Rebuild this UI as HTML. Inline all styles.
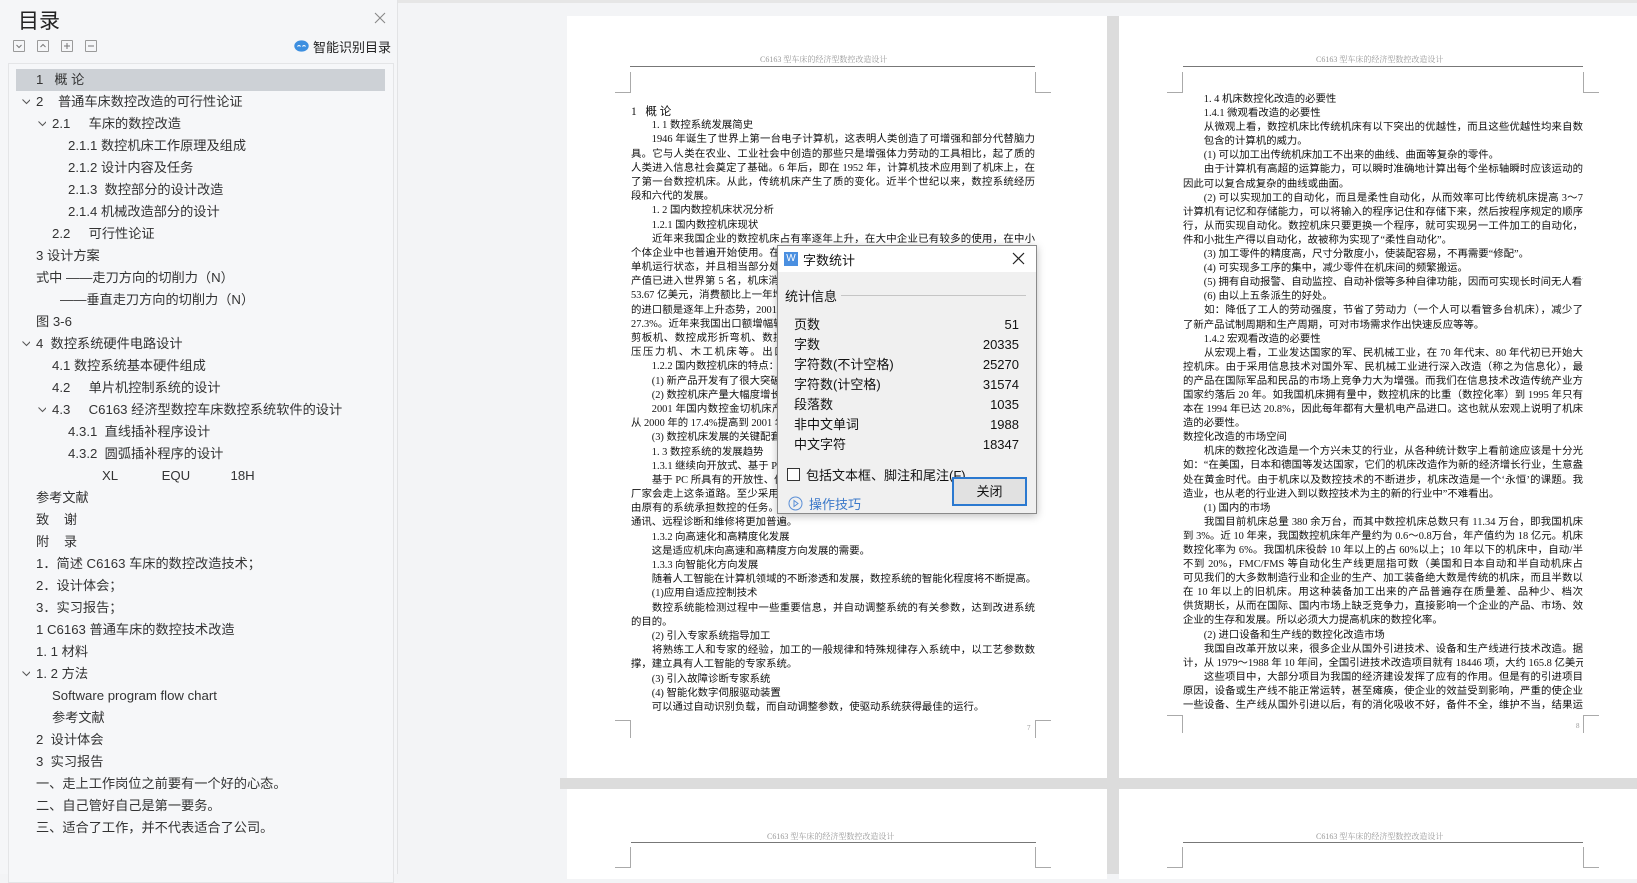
<!DOCTYPE html>
<html><head><meta charset="utf-8"><style>
*{margin:0;padding:0;box-sizing:border-box}
body{width:1637px;height:874px;overflow:hidden;background:#f3f4f6;font-family:"Liberation Sans","Noto Sans CJK SC",sans-serif;position:relative}
.side{position:absolute;left:0;top:0;width:398px;height:874px;background:#f5f6f8;border-right:1px solid #e2e3e5}
.ttl{position:absolute;left:18px;top:5px;font-size:21px;color:#222}
.x{position:absolute;left:372px;top:10px;width:16px;height:16px}
.ib{position:absolute;top:40px;width:12px;height:12px;border:1px solid #9a9a9a;border-radius:1px}
.ib svg{position:absolute;left:1px;top:1px}
.smart{position:absolute;left:313px;top:37px;font-size:13px;color:#222;white-space:nowrap}
.box{position:absolute;left:8px;top:63px;width:386px;height:820px;border:1px solid #e4e5e7;background:#f6f7f9}
.it{position:absolute;font-size:13.2px;color:#333;white-space:pre;line-height:22px}
.sel{position:absolute;left:16px;top:69px;width:369px;height:22px;background:#cdd1d6}
.chev{position:absolute;width:8px;height:8px}
.page{position:absolute;background:#fff}
.hd{position:absolute;font-size:8px;color:#999;white-space:nowrap;font-family:"Liberation Serif","Noto Serif CJK SC",serif}
.hl{position:absolute;height:1px;background:#777}
.cm{position:absolute;border-color:#aaa;border-style:solid;border-width:0}
.txt{position:absolute;font-family:"Liberation Serif","Noto Sans CJK SC",serif;font-size:10.4px;color:#111}
.txt div{white-space:nowrap;height:14.2px;line-height:14.2px;overflow:hidden}
.txt div.j{text-align:justify;text-align-last:justify;white-space:normal}
.p2 div{height:14.1px;line-height:14.1px}
.gap{position:absolute;background:#dcdcdc}
.dlg{position:absolute;left:777px;top:245px;width:260px;height:269px;background:#f0f0f0;border:1px solid #8a8a8a;box-shadow:0 2px 8px rgba(0,0,0,.25);font-size:13px;color:#111}
.dt{position:absolute;left:0;top:0;width:258px;height:26px;background:#fff}
.row{position:absolute;left:16px;width:225px;height:20px;line-height:20px}
.row span{float:right}
</style></head><body>
<div style="position:absolute;left:0;top:0;width:1637px;height:3px;background:#e6e6e6"></div>
<div class="side">
 <div class="ttl">目录</div>
 <svg class="x" viewBox="0 0 16 16"><path d="M3 3L13 13M13 3L3 13" stroke="#888" stroke-width="1.1"/></svg>
 <div class="ib" style="left:13px"><svg width="8" height="8"><path d="M1.5 3L4 5.5L6.5 3" stroke="#777" fill="none"/></svg></div>
 <div class="ib" style="left:37px"><svg width="8" height="8"><path d="M1.5 5L4 2.5L6.5 5" stroke="#777" fill="none"/></svg></div>
 <div class="ib" style="left:61px"><svg width="8" height="8"><path d="M4 1V7M1 4H7" stroke="#777"/></svg></div>
 <div class="ib" style="left:85px"><svg width="8" height="8"><path d="M1 4H7" stroke="#777"/></svg></div>
 <svg style="position:absolute;left:294px;top:40px" width="15" height="12" viewBox="0 0 15 12"><ellipse cx="7.5" cy="6" rx="7.2" ry="5.6" fill="#3d8fe0"/><path d="M3.5 6.5Q5 4.5 6.5 6.5M8.5 6.5Q10 4.5 11.5 6.5" stroke="#fff" fill="none" stroke-width="1.1"/></svg>
 <div class="smart">智能识别目录</div>
 <div class="box"></div>
 <div class="sel"></div>
</div>
<div id="toc"></div>
<!-- pages -->
<div class="page" style="left:567px;top:16px;width:540px;height:762px"></div>
<div class="page" style="left:1119px;top:16px;width:518px;height:762px"></div>
<div class="page" style="left:567px;top:789px;width:540px;height:90px"></div>
<div class="page" style="left:1119px;top:789px;width:518px;height:90px"></div>
<div class="gap" style="left:1107px;top:16px;width:12px;height:858px"></div>
<div class="gap" style="left:560px;top:778px;width:1077px;height:11px"></div>
<div class="hd" style="left:760px;top:54px">C6163 型车床的经济型数控改造设计</div>
<div class="hl" style="left:630px;top:66px;width:405px"></div>
<div class="hd" style="left:1316px;top:54px">C6163 型车床的经济型数控改造设计</div>
<div class="hl" style="left:1183px;top:66px;width:400px"></div>
<div class="hd" style="left:767px;top:831px">C6163 型车床的经济型数控改造设计</div>
<div class="hl" style="left:631px;top:842px;width:405px"></div>
<div class="hd" style="left:1316px;top:831px">C6163 型车床的经济型数控改造设计</div>
<div class="hl" style="left:1183px;top:842px;width:400px"></div>
<!-- corner marks -->
<div class="cm" style="left:615px;top:72px;width:16px;height:21px;border-right-width:1px;border-bottom-width:1px"></div>
<div class="cm" style="left:1035px;top:72px;width:16px;height:21px;border-left-width:1px;border-bottom-width:1px"></div>
<div class="cm" style="left:615px;top:720px;width:16px;height:18px;border-right-width:1px;border-top-width:1px"></div>
<div class="cm" style="left:1035px;top:720px;width:16px;height:18px;border-left-width:1px;border-top-width:1px"></div>
<div class="cm" style="left:1167px;top:72px;width:16px;height:21px;border-right-width:1px;border-bottom-width:1px"></div>
<div class="cm" style="left:1583px;top:72px;width:16px;height:21px;border-left-width:1px;border-bottom-width:1px"></div>
<div class="cm" style="left:1167px;top:715px;width:16px;height:18px;border-right-width:1px;border-top-width:1px"></div>
<div class="cm" style="left:1583px;top:715px;width:16px;height:18px;border-left-width:1px;border-top-width:1px"></div>
<div class="cm" style="left:615px;top:847px;width:16px;height:21px;border-right-width:1px;border-bottom-width:1px"></div>
<div class="cm" style="left:1035px;top:847px;width:16px;height:21px;border-left-width:1px;border-bottom-width:1px"></div>
<div class="cm" style="left:1167px;top:847px;width:16px;height:21px;border-right-width:1px;border-bottom-width:1px"></div>
<div class="cm" style="left:1583px;top:847px;width:16px;height:21px;border-left-width:1px;border-bottom-width:1px"></div>

<div class="txt" style="left:631px;top:105px;width:404px">
<div style="font-size:11.5px">1&nbsp;&nbsp; 概 论</div>
<div>&emsp;&emsp;1. 1 数控系统发展简史</div>
<div class="j">&emsp;&emsp;1946 年诞生了世界上第一台电子计算机，这表明人类创造了可增强和部分代替脑力劳动的工</div>
<div class="j">具。它与人类在农业、工业社会中创造的那些只是增强体力劳动的工具相比，起了质的飞跃，为</div>
<div class="j">人类进入信息社会奠定了基础。6 年后，即在 1952 年，计算机技术应用到了机床上，在美国诞生</div>
<div class="j">了第一台数控机床。从此，传统机床产生了质的变化。近半个世纪以来，数控系统经历了两个阶</div>
<div>段和六代的发展。</div>
<div>&emsp;&emsp;1. 2 国内数控机床状况分析</div>
<div>&emsp;&emsp;1.2.1 国内数控机床现状</div>
<div class="j">&emsp;&emsp;近年来我国企业的数控机床占有率逐年上升，在大中企业已有较多的使用，在中小企业甚至</div>
<div class="j">个体企业中也普遍开始使用。在这些数控机床中，除少量机床以FMS模式集成使用外，大都处于</div>
<div class="j">单机运行状态，并且相当部分处于使用效率不高，管理方式落后的状态。我国数控机床的消费和</div>
<div class="j">产值已进入世界第 5 名，机床消费额按同比增长计算，2001 年我国机床消费额达到了约为</div>
<div class="j">53.67 亿美元，消费额比上一年增长了百分之十几，数控机床的产值也逐年上升，数控机床</div>
<div class="j">的进口额是逐年上升态势，2001 年进口数控机床已达到约 10 亿美元，比上一年增长了约</div>
<div class="j">27.3%。近年来我国出口额增幅较大的数控机床有数控车床、数控磨床、数控钻床、数控</div>
<div class="j">剪板机、数控成形折弯机、数控压力机、加工中心、数控电火花机床、数控线切割机床、</div>
<div class="j">压压力机、木工机床等。出口的数控机床以中低档为主，出口金额相对不大。</div>
<div>&emsp;&emsp;1.2.2 国内数控机床的特点：</div>
<div>&emsp;&emsp;(1) 新产品开发有了很大突破，技术含量高的产品占据主导地位；</div>
<div>&emsp;&emsp;(2) 数控机床产量大幅度增长，数控化率显著提高；</div>
<div class="j">&emsp;&emsp;2001 年国内数控金切机床产量已达 1.8 万台，比上一年增长了约 28.5%。金切机床</div>
<div>从 2000 年的 17.4%提高到 2001 年的 20.2%。</div>
<div>&emsp;&emsp;(3) 数控机床发展的关键配套产品有了突破。</div>
<div>&emsp;&emsp;1. 3 数控系统的发展趋势</div>
<div>&emsp;&emsp;1.3.1 继续向开放式、基于 PC 的第六代方向发展</div>
<div class="j">&emsp;&emsp;基于 PC 所具有的开放性、低成本、高可靠性、软硬件资源丰富等特点，更多的数控系统生产</div>
<div class="j">厂家会走上这条道路。至少采用PC机作为它的前端机，来处理人机界面、编程、联网通信等问题，</div>
<div class="j">由原有的系统承担数控的任务。PC机所具有的友好的人机界面，将普及到所有的数控系统。远程</div>
<div>通讯、远程诊断和维修将更加普遍。</div>
<div>&emsp;&emsp;1.3.2 向高速化和高精度化发展</div>
<div>&emsp;&emsp;这是适应机床向高速和高精度方向发展的需要。</div>
<div>&emsp;&emsp;1.3.3 向智能化方向发展</div>
<div>&emsp;&emsp;随着人工智能在计算机领域的不断渗透和发展，数控系统的智能化程度将不断提高。</div>
<div>&emsp;&emsp;(1)应用自适应控制技术</div>
<div class="j">&emsp;&emsp;数控系统能检测过程中一些重要信息，并自动调整系统的有关参数，达到改进系统运行状态</div>
<div>的目的。</div>
<div>&emsp;&emsp;(2) 引入专家系统指导加工</div>
<div class="j">&emsp;&emsp;将熟练工人和专家的经验，加工的一般规律和特殊规律存入系统中，以工艺参数数据库为支</div>
<div>撑，建立具有人工智能的专家系统。</div>
<div>&emsp;&emsp;(3) 引入故障诊断专家系统</div>
<div>&emsp;&emsp;(4) 智能化数字伺服驱动装置</div>
<div>&emsp;&emsp;可以通过自动识别负载，而自动调整参数，使驱动系统获得最佳的运行。</div>
</div>

<div class="txt p2" style="left:1183px;top:93px;width:400px">
<div>&emsp;&emsp;1. 4 机床数控化改造的必要性</div>
<div>&emsp;&emsp;1.4.1 微观看改造的必要性</div>
<div class="j">&emsp;&emsp;从微观上看，数控机床比传统机床有以下突出的优越性，而且这些优越性均来自数控系统所</div>
<div>&emsp;&emsp;包含的计算机的威力。</div>
<div>&emsp;&emsp;(1) 可以加工出传统机床加工不出来的曲线、曲面等复杂的零件。</div>
<div class="j">&emsp;&emsp;由于计算机有高超的运算能力，可以瞬时准确地计算出每个坐标轴瞬时应该运动的运动量，</div>
<div>因此可以复合成复杂的曲线或曲面。</div>
<div class="j">&emsp;&emsp;(2) 可以实现加工的自动化，而且是柔性自动化，从而效率可比传统机床提高 3～7 倍。由于</div>
<div class="j">计算机有记忆和存储能力，可以将输入的程序记住和存储下来，然后按程序规定的顺序自动去执</div>
<div class="j">行，从而实现自动化。数控机床只要更换一个程序，就可实现另一工件加工的自动化，从而使单</div>
<div>件和小批生产得以自动化，故被称为实现了“柔性自动化”。</div>
<div>&emsp;&emsp;(3) 加工零件的精度高，尺寸分散度小，使装配容易，不再需要“修配”。</div>
<div>&emsp;&emsp;(4) 可实现多工序的集中，减少零件在机床间的频繁搬运。</div>
<div>&emsp;&emsp;(5) 拥有自动报警、自动监控、自动补偿等多种自律功能，因而可实现长时间无人看管加工。</div>
<div>&emsp;&emsp;(6) 由以上五条派生的好处。</div>
<div class="j">&emsp;&emsp;如：降低了工人的劳动强度，节省了劳动力（一个人可以看管多台机床），减少了工装，缩短</div>
<div>了新产品试制周期和生产周期，可对市场需求作出快速反应等等。</div>
<div>&emsp;&emsp;1.4.2 宏观看改造的必要性</div>
<div class="j">&emsp;&emsp;从宏观上看，工业发达国家的军、民机械工业，在 70 年代末、80 年代初已开始大规模应用数</div>
<div class="j">控机床。由于采用信息技术对国外军、民机械工业进行深入改造（称之为信息化），最终使得他们</div>
<div class="j">的产品在国际军品和民品的市场上竞争力大为增强。而我们在信息技术改造传统产业方面比发达</div>
<div class="j">国家约落后 20 年。如我国机床拥有量中，数控机床的比重（数控化率）到 1995 年只有 1.9%，而日</div>
<div class="j">本在 1994 年已达 20.8%，因此每年都有大量机电产品进口。这也就从宏观上说明了机床数控化改</div>
<div>造的必要性。</div>
<div>数控化改造的市场空间</div>
<div class="j">&emsp;&emsp;机床的数控化改造是一个方兴未艾的行业，从各种统计数字上看前途应该是十分光明的，例</div>
<div class="j">如：“在美国，日本和德国等发达国家，它们的机床改造作为新的经济增长行业，生意盎然，正</div>
<div class="j">处在黄金时代。由于机床以及数控技术的不断进步，机床改造是一个‘永恒’的课题。我国的机床改</div>
<div>造业，也从老的行业进入到以数控技术为主的新的行业中”不难看出。</div>
<div>&emsp;&emsp;(1) 国内的市场</div>
<div class="j">&emsp;&emsp;我国目前机床总量 380 余万台，而其中数控机床总数只有 11.34 万台，即我国机床数控化率不</div>
<div class="j">到 3%。近 10 年来，我国数控机床年产量约为 0.6～0.8万台，年产值约为 18 亿元。机床的年产量</div>
<div class="j">数控化率为 6%。我国机床役龄 10 年以上的占 60%以上；10 年以下的机床中，自动/半自动机床</div>
<div class="j">不到 20%，FMC/FMS 等自动化生产线更屈指可数（美国和日本自动和半自动机床占 60%以上）。</div>
<div class="j">可见我们的大多数制造行业和企业的生产、加工装备绝大数是传统的机床，而且半数以上是役龄</div>
<div class="j">在 10 年以上的旧机床。用这种装备加工出来的产品普遍存在质量差、品种少、档次低、成本高、</div>
<div class="j">供货期长，从而在国际、国内市场上缺乏竞争力，直接影响一个企业的产品、市场、效益，影响</div>
<div>企业的生存和发展。所以必须大力提高机床的数控化率。</div>
<div>&emsp;&emsp;(2) 进口设备和生产线的数控化改造市场</div>
<div class="j">&emsp;&emsp;我国自改革开放以来，很多企业从国外引进技术、设备和生产线进行技术改造。据不完全统</div>
<div>计，从 1979～1988 年 10 年间，全国引进技术改造项目就有 18446 项，大约 165.8 亿美元。</div>
<div class="j">&emsp;&emsp;这些项目中，大部分项目为我国的经济建设发挥了应有的作用。但是有的引进项目由于种种</div>
<div class="j">原因，设备或生产线不能正常运转，甚至瘫痪，使企业的效益受到影响，严重的使企业陷入困境。</div>
<div class="j">一些设备、生产线从国外引进以后，有的消化吸收不好，备件不全，维护不当，结果运转不良；</div>
</div>
<div class="hd" style="left:1027px;top:724px;font-size:7px">7</div>
<div class="hd" style="left:1576px;top:722px;font-size:7px">8</div>

<div class="dlg">
 <div class="dt"></div>
 <div style="position:absolute;left:6px;top:6px;width:14px;height:14px;background:#4a8fe0;color:#fff;font-size:10px;line-height:14px;text-align:center">W</div>
 <div style="position:absolute;left:25px;top:4px;font-size:13px">字数统计</div>
 <svg style="position:absolute;left:234px;top:6px" width="13" height="13"><path d="M1 1L12 12M12 1L1 12" stroke="#222" stroke-width="1.2"/></svg>
 <div style="position:absolute;left:7px;top:40px;font-size:13px">统计信息</div>
 <div style="position:absolute;left:63px;top:49px;width:185px;height:1px;background:#c5c5c5"></div>
 <div class="row" style="top:69px">页数<span>51</span></div>
 <div class="row" style="top:89px">字数<span>20335</span></div>
 <div class="row" style="top:109px">字符数(不计空格)<span>25270</span></div>
 <div class="row" style="top:129px">字符数(计空格)<span>31574</span></div>
 <div class="row" style="top:149px">段落数<span>1035</span></div>
 <div class="row" style="top:169px">非中文单词<span>1988</span></div>
 <div class="row" style="top:189px">中文字符<span>18347</span></div>
 <div style="position:absolute;left:9px;top:222px;width:13px;height:13px;border:1px solid #333;background:#fff"></div>
 <div style="position:absolute;left:28px;top:219px">包括文本框、脚注和尾注(<u>F</u>)</div>
 <svg style="position:absolute;left:10px;top:250px" width="15" height="15"><circle cx="7.5" cy="7.5" r="6.5" stroke="#5b8fd6" fill="none"/><path d="M6 4.5L10 7.5L6 10.5Z" stroke="#5b8fd6" fill="none"/></svg>
 <div style="position:absolute;left:31px;top:248px;color:#3a78c9">操作技巧</div>
 <div style="position:absolute;left:174px;top:231px;width:75px;height:29px;border:2px solid #2b79d0;background:#e1e1e1;text-align:center;line-height:25px">关闭</div>
</div>

<script>
var items=[
[36,"1   概 论",0],[36,"2    普通车床数控改造的可行性论证",22],[52,"2.1     车床的数控改造",38],
[68,"2.1.1 数控机床工作原理及组成",0],[68,"2.1.2 设计内容及任务",0],[68,"2.1.3  数控部分的设计改造",0],
[68,"2.1.4 机械改造部分的设计",0],[52,"2.2     可行性论证",0],[36,"3 设计方案",0],
[36,"式中 ——走刀方向的切削力（N）",0],[60,"——垂直走刀方向的切削力（N）",0],[36,"图 3-6",0],
[36,"4  数控系统硬件电路设计",22],[52,"4.1 数控系统基本硬件组成",0],[52,"4.2     单片机控制系统的设计",0],
[52,"4.3     C6163 经济型数控车床数控系统软件的设计",38],[68,"4.3.1  直线插补程序设计",0],[68,"4.3.2  圆弧插补程序的设计",0],
[102,"XL            EQU           18H",0],[36,"参考文献",0],[36,"致    谢",0],[36,"附    录",0],
[36,"1．简述 C6163 车床的数控改造技术；",0],[36,"2．设计体会；",0],[36,"3．实习报告；",0],
[36,"1 C6163 普通车床的数控技术改造",0],[36,"1. 1 材料",0],[36,"1. 2 方法",22],
[52,"Software program flow chart",0],[52,"参考文献",0],[36,"2  设计体会",0],[36,"3  实习报告",0],
[36,"一、走上工作岗位之前要有一个好的心态。",0],[36,"二、自己管好自己是第一要务。",0],[36,"三、适合了工作，并不代表适合了公司。",0]];
var h="";
items.forEach(function(a,i){var y=69+i*22;
h+='<div class="it" style="left:'+a[0]+'px;top:'+y+'px">'+a[1]+'</div>';
if(a[2])h+='<svg class="chev" style="left:'+a[2]+'px;top:'+(y+8)+'px" width="9" height="6"><path d="M0.5 0.5L4.5 4.5L8.5 0.5" stroke="#555" fill="none"/></svg>';});
document.getElementById("toc").innerHTML=h;
</script>
</body></html>
